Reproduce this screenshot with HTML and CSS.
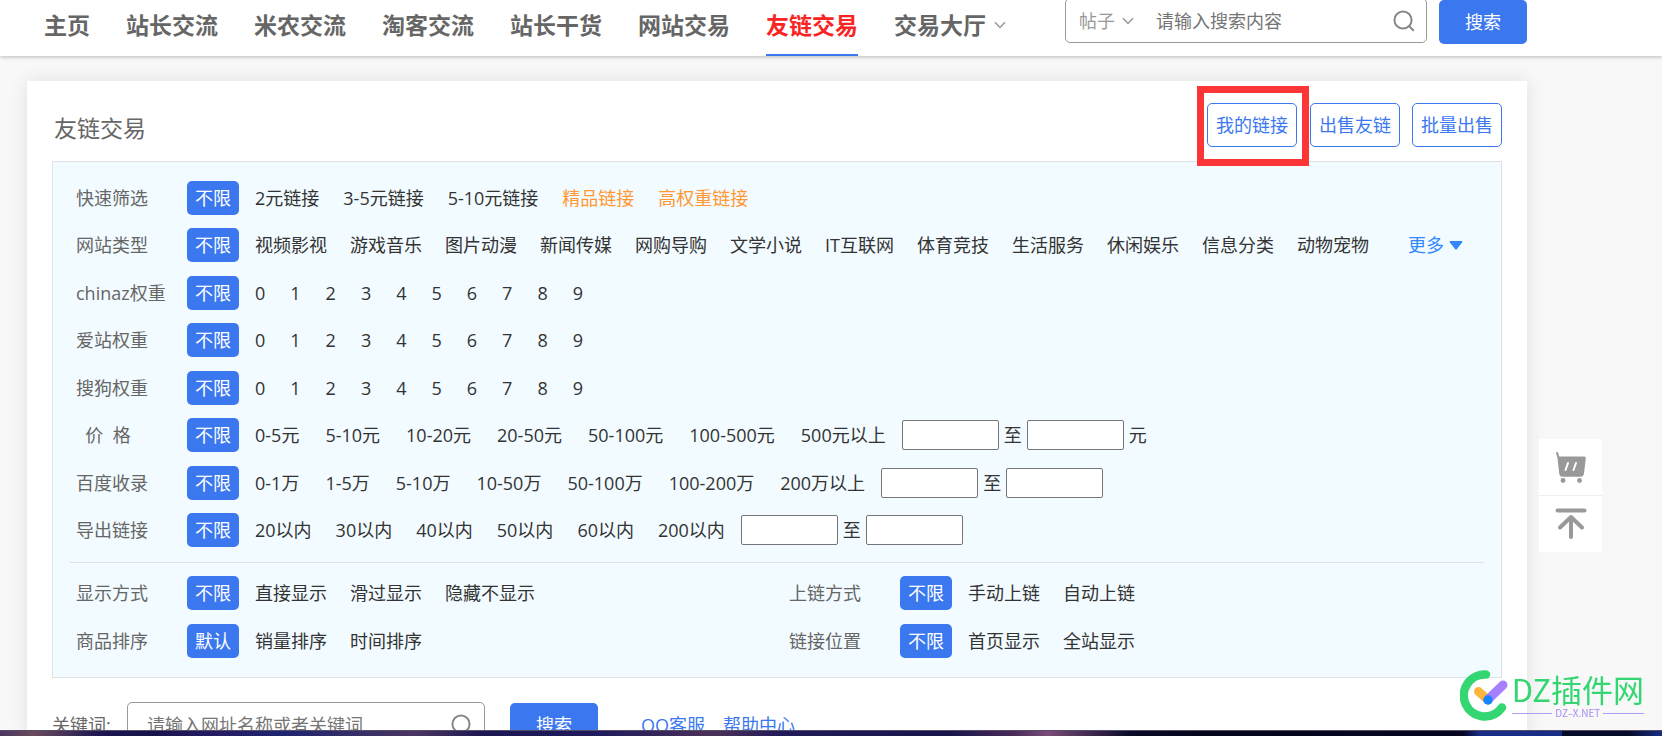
FILE: index.html
```html
<!DOCTYPE html>
<html lang="zh-CN">
<head>
<meta charset="utf-8">
<title>友链交易</title>
<link rel="stylesheet" href="styles.css">
</head>
<body>
<header class="topbar">
  <nav class="nav">
    <a href="#">主页</a>
    <a href="#">站长交流</a>
    <a href="#">米农交流</a>
    <a href="#">淘客交流</a>
    <a href="#">站长干货</a>
    <a href="#">网站交易</a>
    <a href="#" class="current">友链交易</a>
    <a href="#" class="has-menu">交易大厅<svg class="chevron" viewBox="0 0 12 8" width="12" height="8"><path d="M1 1.2 6 6.4 11 1.2"/></svg></a>
  </nav>
  <form class="search">
    <div class="search-box">
      <select class="search-type" aria-label="搜索类型"><option>帖子</option></select>
      <svg class="chevron" viewBox="0 0 12 8" width="12" height="8"><path d="M1 1.2 6 6.4 11 1.2"/></svg>
      <input class="search-input" type="text" aria-label="搜索内容" placeholder="请输入搜索内容">
      <button class="icon-btn" type="button" aria-label="搜索"><svg viewBox="0 0 22 22" width="22" height="22"><circle cx="10" cy="10" r="8.6"/><path d="m16.2 16.2 4.6 4.6"/></svg></button>
    </div>
    <button class="btn-main" type="button">搜索</button>
  </form>
</header>

<main class="card">
  <div class="card-head">
    <h1 class="title">友链交易</h1>
    <div class="actions">
      <span class="marked"><button class="btn-line" type="button">我的链接</button></span>
      <button class="btn-line" type="button">出售友链</button>
      <button class="btn-line" type="button">批量出售</button>
    </div>
  </div>

  <section class="panel">
    <div class="rows">
      <div class="row"><span class="label">快速筛选</span><button class="pill" type="button">不限</button>
        <div class="opts mid"><a href="#">2元链接</a><a href="#">3-5元链接</a><a href="#">5-10元链接</a><a href="#" class="hot">精品链接</a><a href="#" class="hot">高权重链接</a></div></div>
      <div class="row"><span class="label">网站类型</span><button class="pill" type="button">不限</button>
        <div class="opts"><a href="#">视频影视</a><a href="#">游戏音乐</a><a href="#">图片动漫</a><a href="#">新闻传媒</a><a href="#">网购导购</a><a href="#">文学小说</a><a href="#">IT互联网</a><a href="#">体育竞技</a><a href="#">生活服务</a><a href="#">休闲娱乐</a><a href="#">信息分类</a><a href="#">动物宠物</a></div>
        <a class="more" href="#">更多<svg viewBox="0 0 14 9" width="14" height="9"><path d="M1.2 0h11.6q1 .2.4 1.200L7.800 8.200q-.8.800-1.600 0L.8 1.200Q.2.200 1.200 0z"/></svg></a></div>
      <div class="row"><span class="label">chinaz权重</span><button class="pill" type="button">不限</button>
        <div class="opts num"><a href="#">0</a><a href="#">1</a><a href="#">2</a><a href="#">3</a><a href="#">4</a><a href="#">5</a><a href="#">6</a><a href="#">7</a><a href="#">8</a><a href="#">9</a></div></div>
      <div class="row"><span class="label">爱站权重</span><button class="pill" type="button">不限</button>
        <div class="opts num"><a href="#">0</a><a href="#">1</a><a href="#">2</a><a href="#">3</a><a href="#">4</a><a href="#">5</a><a href="#">6</a><a href="#">7</a><a href="#">8</a><a href="#">9</a></div></div>
      <div class="row"><span class="label">搜狗权重</span><button class="pill" type="button">不限</button>
        <div class="opts num"><a href="#">0</a><a href="#">1</a><a href="#">2</a><a href="#">3</a><a href="#">4</a><a href="#">5</a><a href="#">6</a><a href="#">7</a><a href="#">8</a><a href="#">9</a></div></div>
      <div class="row"><span class="label">&nbsp;&nbsp;价&nbsp;&nbsp;格</span><button class="pill" type="button">不限</button>
        <div class="opts range"><a href="#">0-5元</a><a href="#">5-10元</a><a href="#">10-20元</a><a href="#">20-50元</a><a href="#">50-100元</a><a href="#">100-500元</a><a href="#">500元以上</a></div>
        <div class="between"><input type="text" aria-label="最低价格"><span>至</span><input type="text" aria-label="最高价格"><span>元</span></div></div>
      <div class="row"><span class="label">百度收录</span><button class="pill" type="button">不限</button>
        <div class="opts range"><a href="#">0-1万</a><a href="#">1-5万</a><a href="#">5-10万</a><a href="#">10-50万</a><a href="#">50-100万</a><a href="#">100-200万</a><a href="#">200万以上</a></div>
        <div class="between"><input type="text" aria-label="最少收录"><span>至</span><input type="text" aria-label="最多收录"></div></div>
      <div class="row"><span class="label">导出链接</span><button class="pill" type="button">不限</button>
        <div class="opts mid"><a href="#">20以内</a><a href="#">30以内</a><a href="#">40以内</a><a href="#">50以内</a><a href="#">60以内</a><a href="#">200以内</a></div>
        <div class="between"><input type="text" aria-label="最少导出"><span>至</span><input type="text" aria-label="最多导出"></div></div>
    </div>
    <div class="pairs">
      <div class="row"><span class="label">显示方式</span><button class="pill" type="button">不限</button>
        <div class="opts"><a href="#">直接显示</a><a href="#">滑过显示</a><a href="#">隐藏不显示</a></div></div>
      <div class="row"><span class="label">上链方式</span><button class="pill" type="button">不限</button>
        <div class="opts"><a href="#">手动上链</a><a href="#">自动上链</a></div></div>
      <div class="row"><span class="label">商品排序</span><button class="pill" type="button">默认</button>
        <div class="opts"><a href="#">销量排序</a><a href="#">时间排序</a></div></div>
      <div class="row"><span class="label">链接位置</span><button class="pill" type="button">不限</button>
        <div class="opts"><a href="#">首页显示</a><a href="#">全站显示</a></div></div>
    </div>
  </section>

  <form class="keyword">
    <label for="kw">关键词:</label>
    <div class="keyword-box">
      <input id="kw" type="text" placeholder="请输入网址名称或者关键词">
      <button class="icon-btn" type="button" aria-label="搜索关键词"><svg viewBox="0 0 22 22" width="22" height="22"><circle cx="10" cy="10" r="8.6"/><path d="m16.2 16.2 4.6 4.6"/></svg></button>
    </div>
    <button class="btn-main" type="button">搜索</button>
    <div class="help"><a href="#">QQ客服</a><a href="#">帮助中心</a></div>
  </form>
</main>

<aside class="side">
  <button type="button" aria-label="购物车"><svg viewBox="0 0 32 32" width="32" height="32"><path class="fill" d="M1 2q0-1 1-1t1.300 1L4 5.500h25q2 0 1.800 2L29 22.500q-.6 3.300-3.500 3.300H7.800q-3.200 0-3.600-3.300L2.500 7z"/><path class="cut" d="m13 12-2.500 7M21 12l-2.500 7"/><circle class="fill" cx="8" cy="29.500" r="2.400"/><circle class="fill" cx="24.500" cy="29.500" r="2.400"/></svg></button>
  <button type="button" aria-label="返回顶部"><svg viewBox="0 0 32 32" width="32" height="32"><path class="line" d="M2.500 2.500h27M16 29V9.500M5 19.500 16 9l11 10.500"/></svg></button>
</aside>

<div class="brand">
  <svg viewBox="0 0 48 52" width="48" height="52"><path d="M26 5.500A21 21 0 1 0 42 38.500" fill="none" stroke="#33d671" stroke-width="8.500" stroke-linecap="round"/><path d="M18.500 22.500 28 31" stroke="#ffb43c" stroke-width="9" stroke-linecap="round"/><path d="M43 16 28 30.500" stroke="#a680ff" stroke-width="9" stroke-linecap="round"/><circle cx="28" cy="31" r="4.700" fill="#1684fc"/></svg>
  <div class="brand-text"><strong>DZ插件网</strong><small>DZ–X.NET</small></div>
</div>
<div class="desktop-edge"></div>
</body>
</html>
```
FILE: styles.css
```css
* { box-sizing: border-box; }
html, body { height: 100%; }
body {
  display: flex;
  flex-direction: column;
  margin: 0;
  overflow: hidden;
  background: #f8f8f8;
  color: #333;
  font: 18px/24px "Open Sans", "Noto Sans CJK SC", sans-serif;
}
a { color: inherit; text-decoration: none; }
button, input, select { font: inherit; }
button { padding: 0; border: 0; cursor: pointer; white-space: nowrap; }
svg { display: block; flex: none; }

.topbar {
  position: relative;
  flex: none;
  display: flex;
  justify-content: space-between;
  align-items: flex-start;
  height: 56px;
  padding: 0 135px 0 44px;
  background: #fff;
  box-shadow: 0 1px 4px rgba(0, 0, 0, .25);
}
.nav { display: flex; gap: 36px; height: 56px; }
.nav a {
  display: flex;
  align-items: center;
  padding-bottom: 5px;
  border-bottom: 2px solid transparent;
  color: #666;
  font-size: 23px;
  font-weight: 700;
  white-space: nowrap;
}
.nav .current { color: #f92424; border-color: #3b78f0; }
.nav .has-menu { gap: 8px; }
.chevron { fill: none; stroke: #999; stroke-width: 1.5; }

.search { display: flex; gap: 12px; align-items: flex-start; }
.search-box {
  display: flex;
  align-items: center;
  width: 362px;
  height: 45px;
  margin-top: -2px;
  padding: 0 11px 0 13px;
  border: 1px solid #999;
  border-radius: 5px;
}
.search-type {
  width: 43px;
  padding: 0;
  border: 0;
  appearance: none;
  background: none;
  color: #999;
}
.search-input {
  flex: 1;
  min-width: 0;
  margin-left: 22px;
  padding: 0;
  border: 0;
  background: none;
}
input::placeholder { color: #757575; opacity: 1; }
.icon-btn { background: none; }
.icon-btn svg { fill: none; stroke: #888; stroke-width: 2; }
.btn-main {
  width: 88px;
  height: 44px;
  border-radius: 5px;
  background: #3b78f0;
  color: #fff;
}

.card {
  flex: 1;
  min-height: 0;
  margin: 25px 135px 0 27px;
  padding: 0 25px;
  background: #fff;
  box-shadow: 0 0 18px rgba(0, 0, 0, .1);
}
.card-head {
  display: flex;
  justify-content: space-between;
  padding-top: 22px;
  height: 80px;
}
.title {
  margin: 0;
  padding: 9px 0 0 2px;
  color: #666;
  font-size: 23px;
  font-weight: 400;
  line-height: 32px;
}
.actions { display: flex; gap: 12px; align-items: flex-start; }
.btn-line {
  width: 90px;
  height: 44px;
  border: 1px solid #3b78f0;
  border-radius: 5px;
  background: #fff;
  color: #3b78f0;
}
.marked { position: relative; display: flex; margin-right: 1px; }
.marked::after {
  content: "";
  position: absolute;
  inset: -17px -12px -19px -10px;
  border: 7px solid #fc3636;
  pointer-events: none;
}

.panel {
  padding: 19px 17px;
  border: 1px solid #dfe2e5;
  background: #f2fbff;
}
.row { display: flex; align-items: center; height: 34px; margin-bottom: 13px; padding: 0 17px 0 6px; }
.rows .row:nth-child(even) { margin-bottom: 14px; }
.rows { padding-bottom: 1px; border-bottom: 1px solid #dfe2e5; }
.pairs {
  display: grid;
  grid-template-columns: 1fr 1fr;
  gap: 14px 12px;
  padding-top: 13px;
}
.pairs .row { margin: 0; }
.label { flex: none; width: 111px; color: #666; }
.pill {
  flex: none;
  width: 52px;
  height: 34px;
  margin-right: 16px;
  border-radius: 5px;
  background: #3b78f0;
  color: #fff;
}
.opts { display: flex; gap: 23px; white-space: nowrap; }
.opts.mid { gap: 24px; }
.opts.num { gap: 25px; }
.opts.range { gap: 26px; }
.hot { color: #ff9833; }
.more { display: flex; gap: 5px; align-items: center; margin-left: auto; padding-right: 4px; color: #3388ff; }
.more svg { fill: #3388ff; }
.between { display: flex; gap: 5px; align-items: center; margin-left: 16px; }
.between input {
  width: 97px;
  height: 30px;
  border: 1px solid #767676;
  border-radius: 2px;
  background: #fff;
}

.keyword { display: flex; align-items: center; padding-top: 24px; color: #666; }
.keyword label { width: 75px; }
.keyword-box {
  display: flex;
  align-items: center;
  width: 358px;
  height: 45px;
  padding: 0 11px 0 19px;
  border: 1px solid #999;
  border-radius: 5px;
}
.keyword-box input { flex: 1; min-width: 0; padding: 0; border: 0; }
.keyword .btn-main { margin-left: 25px; }
.help { display: flex; gap: 18px; margin-left: 43px; color: #3b78f0; }

.side {
  position: fixed;
  top: 439px;
  right: 60px;
  display: grid;
  gap: 1px;
  background: #eee;
}
.side button { display: grid; place-items: center; width: 63px; height: 56px; background: #fff; }
.side .fill { fill: #999; }
.side .cut { fill: none; stroke: #fff; stroke-width: 2; stroke-linecap: round; }
.side .line { fill: none; stroke: #999; stroke-width: 4; stroke-linecap: round; stroke-linejoin: round; }

.brand { position: fixed; right: 18px; bottom: 15px; display: flex; gap: 4px; align-items: center; }
.brand-text { display: grid; }
.brand strong { color: #33d671; font: 400 31px/36px "Noto Sans CJK SC", sans-serif; }
.brand small {
  display: flex;
  gap: 3px;
  align-items: center;
  color: #a88bf5;
  font: 10px/12px "Noto Sans CJK SC", sans-serif;
}
.brand small::before, .brand small::after { content: ""; flex: 1; height: 1px; background: #b39bf7; }

.desktop-edge {
  position: fixed;
  inset: auto 0 0;
  height: 6px;
  border-top: 1px solid #554d66;
  background: linear-gradient(90deg, #4a3560, #6b4a5c 2%, #1c1650 6%, #17124a 9%, #241b63 13%, #1d2470 17%, #4a3560 25%, #1b1752 29%, #1e1a5c 36%, #4b3158 43%, #201a58 47%, #17144a 57%, #4a2a58 61%, #7a4c78 63%, #0a0a28 68%, #04061c 72%, #050520 88%, #182d86 89%, #182d86 94%, #050a28 94%, #050a28 98%, #182d86);
}
```
